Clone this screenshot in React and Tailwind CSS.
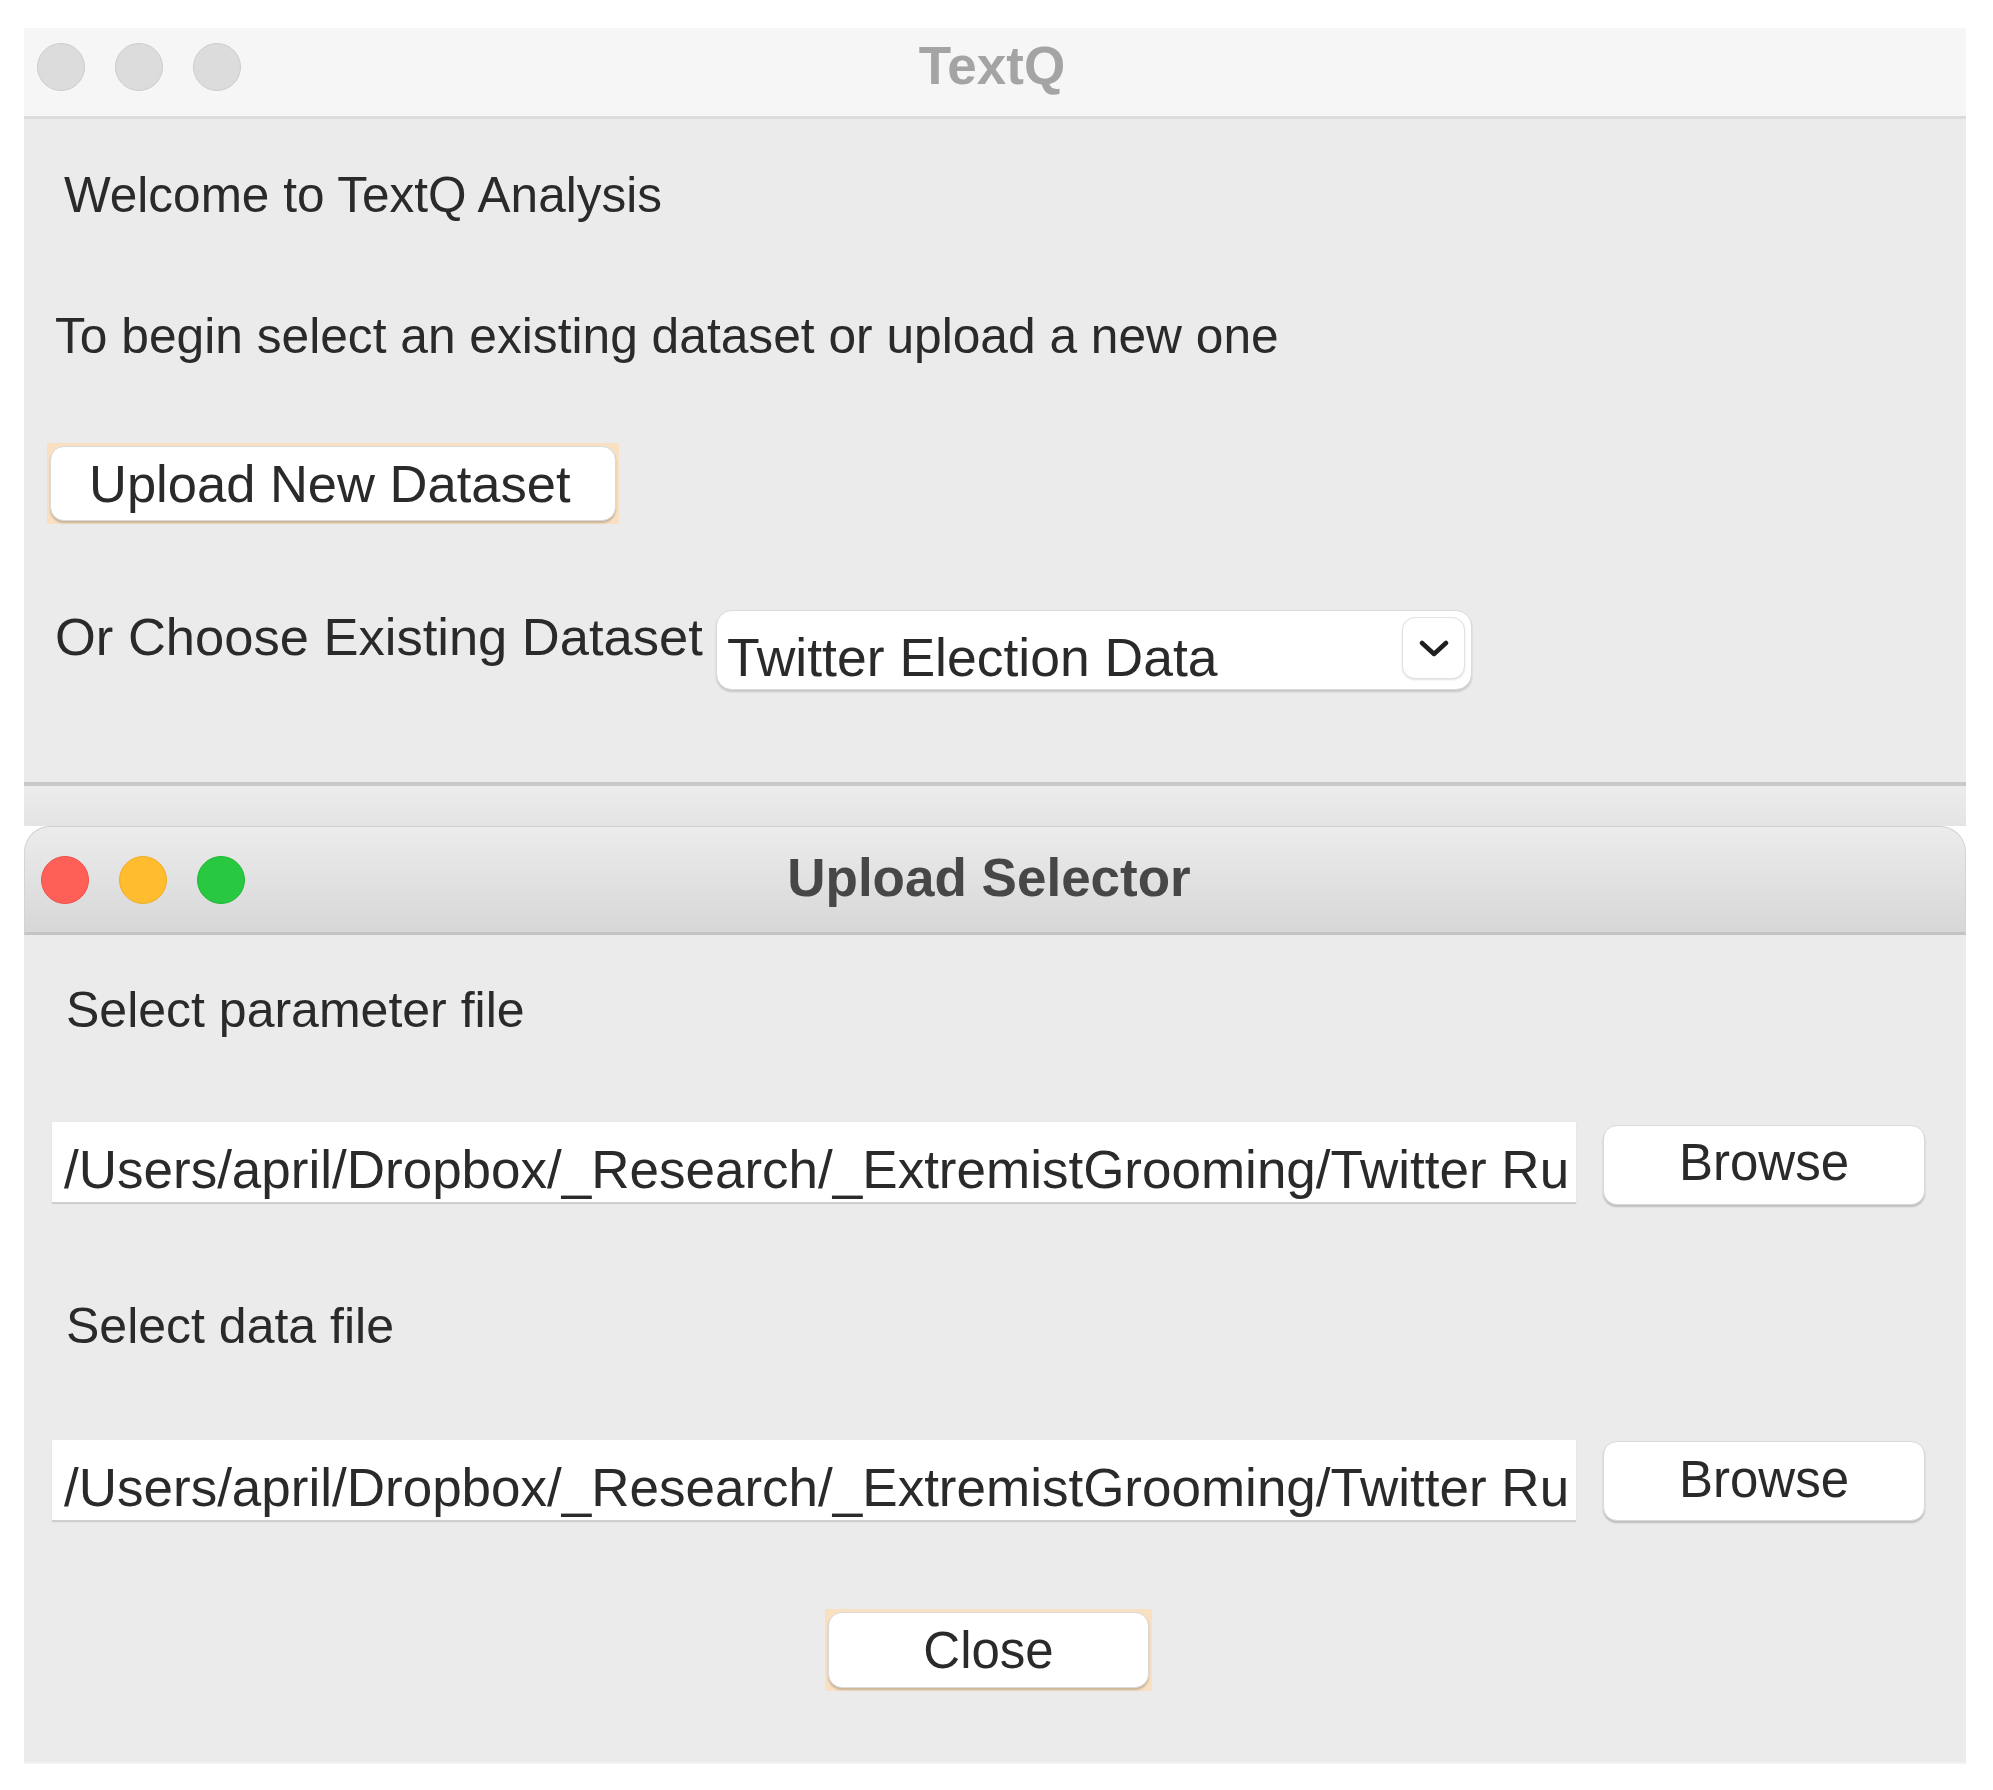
function Light({ className }) {
  return <span className={"block h-[48px] w-[48px] rounded-full " + className} />;
}

function MacButton({ label, focused, className, textClass }) {
  const inner = (
    <div
      className={
        "flex h-full w-full justify-center rounded-[14px] border border-[#dadada] bg-white shadow-[0_2px_2px_rgba(0,0,0,0.2)] " +
        textClass
      }
    >
      {label}
    </div>
  );
  if (!focused) return <div className={className}>{inner}</div>;
  return <div className={"bg-[#f9e0c2] p-[3px] " + className}>{inner}</div>;
}

function PathField({ value }) {
  return (
    <div className="h-[80px] w-[1524px] overflow-hidden whitespace-nowrap bg-white pl-[12px] pt-[21px] text-[53px] leading-none shadow-[0_2px_1px_rgba(0,0,0,0.12)]">
      {value}
    </div>
  );
}

export default function App() {
  const path = "/Users/april/Dropbox/_Research/_ExtremistGrooming/Twitter Ru";

  return (
    <div className="min-h-screen bg-white pl-[24px] pt-[28px] font-['Liberation_Sans',Arial,sans-serif] text-[#2a2a2a]">
      <div className="w-[1942px]">
        {/* TextQ main window */}
        <div className="grid h-[91px] grid-cols-[1fr_auto_1fr] items-start border-b-[3px] border-[#dcdcdc] bg-[#f6f6f6]">
          <div className="flex gap-[30px] pl-[13px] pt-[15px]">
            <Light className="border border-[#cdcdcd] bg-[#dcdcdc]" />
            <Light className="border border-[#cdcdcd] bg-[#dcdcdc]" />
            <Light className="border border-[#cdcdcd] bg-[#dcdcdc]" />
          </div>
          <div className="pr-[6px] pt-[11px] text-[53px] font-bold leading-none text-[#a4a4a4]">TextQ</div>
          <div />
        </div>

        <div className="flex h-[667px] flex-col items-start border-b-[4px] border-[#c8c8c8] bg-[#ebebeb]">
          <div className="ml-[40px] mt-[51px] text-[49.5px] leading-none">Welcome to TextQ Analysis</div>
          <div className="ml-[31px] mt-[92px] text-[49.7px] leading-none">
            To begin select an existing dataset or upload a new one
          </div>
          <MacButton
            label="Upload New Dataset"
            focused
            className="ml-[23px] mt-[82px] h-[81px] w-[572px]"
            textClass="justify-start pl-[38px] pt-[11px] text-[52.5px] leading-none"
          />
          <div className="ml-[31px] mt-[86px] flex">
            <div className="w-[661px] pt-[1px] text-[52.5px] leading-none">Or Choose Existing Dataset</div>
            <div className="flex h-[80px] w-[756px] items-start justify-between rounded-[16px] border border-[#dadada] bg-white shadow-[0_2px_2px_rgba(0,0,0,0.16)]">
              <span className="pl-[10px] pt-[20px] text-[53.5px] leading-none">Twitter Election Data</span>
              <span className="mr-[6px] mt-[6px] flex h-[62px] w-[63px] items-center justify-center rounded-[13px] border border-[#e2e2e2] bg-white shadow-[0_1px_2px_rgba(0,0,0,0.12)]">
                <svg width="30" height="19" viewBox="0 0 30 19" fill="none">
                  <path d="M3 4l12 11L27 4" stroke="#1f1f1f" strokeWidth="4.5" strokeLinecap="round" strokeLinejoin="round" />
                </svg>
              </span>
            </div>
          </div>
        </div>

        <div className="h-[40px] bg-gradient-to-b from-[#ececec] to-[#e4e4e4]" />

        {/* Upload Selector window */}
        <div className="grid h-[109px] grid-cols-[1fr_auto_1fr] items-start rounded-t-[26px] border-x border-t border-b-[3px] border-x-[#d4d4d4] border-t-[#cfcfcf] border-b-[#c4c4c4] bg-gradient-to-b from-[#ececec] to-[#d7d7d7]">
          <div className="flex gap-[30px] pl-[16px] pt-[29px]">
            <Light className="bg-[#fe5f57] border border-[#f0524b]" />
            <Light className="bg-[#febc2e] border border-[#eeae26]" />
            <Light className="bg-[#28c840] border border-[#20b838]" />
          </div>
          <div className="pr-[12px] pt-[24px] text-[53px] font-bold leading-none text-[#474747]">Upload Selector</div>
          <div />
        </div>

        <div className="flex h-[829px] flex-col items-start border-b-[2px] border-[#f2f2f2] bg-[#ebebeb]">
          <div className="ml-[42px] mt-[50px] text-[50px] leading-none">Select parameter file</div>
          <div className="ml-[28px] mt-[87px] flex items-start gap-[27px]">
            <PathField value={path} />
            <MacButton
              label="Browse"
              className="mt-[3px] h-[80px] w-[322px]"
              textClass="pt-[11px] text-[51px] leading-none"
            />
          </div>
          <div className="ml-[42px] mt-[96px] text-[50px] leading-none">Select data file</div>
          <div className="ml-[28px] mt-[89px] flex items-start gap-[27px]">
            <PathField value={path} />
            <MacButton
              label="Browse"
              className="mt-[1px] h-[80px] w-[322px]"
              textClass="pt-[12px] text-[51px] leading-none"
            />
          </div>
          <MacButton
            label="Close"
            focused
            className="ml-[801px] mt-[88px] h-[82px] w-[327px]"
            textClass="pt-[12px] text-[51px] leading-none"
          />
        </div>
      </div>
    </div>
  );
}
